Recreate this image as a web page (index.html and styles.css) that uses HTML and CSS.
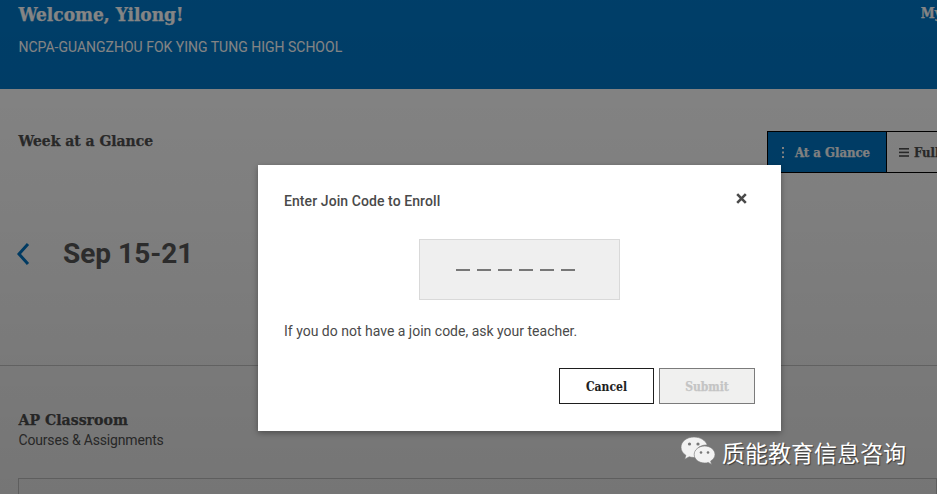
FILE: index.html
```html
<!DOCTYPE html>
<html lang="en">
<head>
<meta charset="utf-8">
<title>Enter Join Code</title>
<link rel="stylesheet" href="styles.css">
</head>
<body>
<div class="page">
  <header class="hero">
    <div class="hero-text">
      <h1 class="welcome">Welcome, Yilong!</h1>
      <p class="school">NCPA-GUANGZHOU FOK YING TUNG HIGH SCHOOL</p>
    </div>
    <span class="my-link">My</span>
  </header>
  <section class="week">
    <div class="week-head">
      <h2 class="week-title">Week at a Glance</h2>
      <div class="toggle">
        <span class="toggle-btn is-active">
          <svg class="toggle-icon" width="4" height="11" viewBox="0 0 4 11"><rect x="1" y="0" width="2" height="2"/><rect x="1" y="4.5" width="2" height="2"/><rect x="1" y="9" width="2" height="2"/></svg>
          <span class="toggle-label">At a Glance</span>
        </span>
        <span class="toggle-btn">
          <svg class="toggle-icon" width="10" height="9" viewBox="0 0 10 9"><rect y="0" width="10" height="1.6"/><rect y="3.6" width="10" height="1.6"/><rect y="7.2" width="10" height="1.6"/></svg>
          <span class="toggle-label">Full</span>
        </span>
      </div>
    </div>
    <div class="date-row">
      <svg class="chev" width="14" height="24" viewBox="0 0 14 24"><path d="M12 2 L3 12 L12 22" fill="none" stroke="currentColor" stroke-width="3"/></svg>
      <span class="date">Sep 15-21</span>
    </div>
  </section>
  <section class="classroom">
    <h2 class="class-title">AP Classroom</h2>
    <p class="class-sub">Courses &amp; Assignments</p>
    <div class="class-card"></div>
  </section>
</div>

<div class="scrim"></div>

<div class="modal">
  <div class="modal-head">
    <h3 class="modal-title">Enter Join Code to Enroll</h3>
    <svg class="close" width="11" height="11" viewBox="0 0 11 11"><path d="M1.2 1.2 L9.8 9.8 M9.8 1.2 L1.2 9.8" stroke="currentColor" stroke-width="2.6" fill="none"/></svg>
  </div>
  <div class="code-box">
    <span class="dash"></span><span class="dash"></span><span class="dash"></span><span class="dash"></span><span class="dash"></span><span class="dash"></span>
  </div>
  <p class="hint">If you do not have a join code, ask your teacher.</p>
  <div class="actions">
    <button class="btn btn-cancel">Cancel</button>
    <button class="btn btn-submit">Submit</button>
  </div>
</div>

<div class="watermark">
  <svg class="wm-icon" width="36" height="31" viewBox="0 0 36 31">
    <path class="wm-back" d="M14 1C6.800 1 1 5.600 1 11.300c0 3.300 1.900 6.100 4.900 8l-1.200 3.900 4.500-2.400c1.500.4 3 .7 4.800.7.500 0 1 0 1.500-.1-.3-.9-.5-1.900-.5-2.900 0-5.300 5-9.500 11.300-9.500h.9C25.700 4.500 20.400 1 14 1z"/>
    <path class="wm-front" d="M35 18.500c0-4.800-4.700-8.500-10.300-8.500-5.900 0-10.500 3.700-10.500 8.500s4.600 8.500 10.500 8.500c1.200 0 2.400-.2 3.500-.6l3.400 2-1-3.300c2.700-1.700 4.400-4 4.400-6.600z"/>
    <circle class="wm-eye" cx="9.500" cy="8" r="1.600"/><circle class="wm-eye" cx="18" cy="8" r="1.600"/>
    <circle class="wm-eye" cx="21" cy="16.500" r="1.300"/><circle class="wm-eye" cx="28" cy="16.500" r="1.300"/>
  </svg>
  <span class="wm-text">质能教育信息咨询</span>
</div>
</body>
</html>
```
FILE: styles.css
```css
* { box-sizing: border-box; }
html, body { margin: 0; height: 100%; overflow: hidden; background: #fff; }
body { font-family: Roboto, "Liberation Sans", sans-serif; color: #555; }
h1, h2, h3, p { margin: 0; }

.welcome, .my-link, .week-title, .toggle-btn, .class-title, .btn {
  font-family: "DejaVu Serif Condensed", "DejaVu Serif", serif;
  font-weight: 700;
  -webkit-text-stroke: .25px currentColor;
}

.page { width: 937px; height: 494px; overflow: hidden; }

.hero {
  height: 89px;
  background: #0077c8;
  color: #fff;
  padding: 0 0 0 18.5px;
  display: flex;
  justify-content: space-between;
  align-items: flex-start;
}
.welcome { font-size: 18.9px; line-height: 28px; }
.school { font-size: 14px; line-height: 20px; margin-top: 9px; }
.my-link { font-size: 14px; line-height: 26px; margin-right: -5px; }

.week { height: 277px; border-bottom: 1px solid #ccc; padding-left: 18.5px; }
.week-head { display: flex; justify-content: space-between; align-items: flex-start; padding-top: 42px; margin-right: -120px; }
.week-title { font-size: 15.5px; line-height: 21px; margin-top: -1px; color: #505050; }
.toggle { display: flex; width: 290px; height: 42px; border: 1px solid #000; flex-shrink: 0; }
.toggle-btn {
  display: flex; align-items: center; gap: 5px;
  padding: 0 0 0 12px;
  font-size: 13px;
  white-space: nowrap;
  background: #fff;
  color: #505050;
}
.toggle-btn.is-active { width: 119px; background: #0077c8; color: #fff; border-right: 1px solid #000; padding-left: 13px; gap: 10px; }
.toggle-icon { fill: currentColor; }

.date-row { display: flex; align-items: center; gap: 33px; margin: 63px 0 0 -2.5px; }
.chev { color: #0077c8; }
.date { font-size: 28px; line-height: 36px; font-weight: 700; color: #5a5a5a; }

.classroom { padding: 44px 0 0 18.5px; }
.class-title { font-size: 15.7px; line-height: 20px; color: #505050; }
.class-sub { font-size: 14px; line-height: 20px; letter-spacing: -.18px; }
.class-card { height: 40px; margin: 28px 0 0 -.5px; border: 1px solid #ccc; }

.scrim {
  position: absolute; inset: 0;
  background: linear-gradient(rgba(0,0,0,.48), rgba(0,0,0,.54));
}

.modal {
  position: absolute;
  left: 258px; top: 165px;
  width: 523px; height: 266px;
  background: #fff;
  padding: 26px;
  box-shadow: 0 2px 6px rgba(0,0,0,.35);
  color: #4a4a4a;
}
.modal-head { display: flex; justify-content: space-between; align-items: flex-start; height: 48px; }
.modal-title { font-size: 14px; font-weight: 500; line-height: 20px; letter-spacing: .08px; }
.close { margin: 2px 8px 0 0; }
.code-box {
  width: 201px; height: 61px; margin-left: 135px; padding-right: 8px;
  background: #efefef; border: 1px solid #d9d9d9;
  display: flex; align-items: center; justify-content: center; gap: 7.2px;
}
.dash { width: 14px; height: 2px; background: #777; }
.hint { font-size: 14px; line-height: 20px; margin-top: 21px; }
.actions { display: flex; justify-content: flex-end; gap: 5px; margin-top: 27px; }
.btn { width: 95px; height: 36px; padding: 2px 0 0; background: #fff; font-size: 12px; line-height: 1; }
.btn-cancel { border: 1px solid #1e1e1e; color: #1e1e1e; -webkit-text-stroke: .1px currentColor; }
.btn-submit { width: 96px; border: 1px solid #7b7b7b; background: #f0f0ef; color: #c4c4c4; }

.watermark {
  position: absolute; left: 680px; top: 436px;
  display: flex; align-items: center; gap: 6px;
  color: #fff;
}
.wm-back, .wm-front { fill: #f2f2f2; stroke: #777; stroke-width: .6; }
.wm-eye { fill: #777; }
.wm-text {
  font-family: "Noto Sans CJK SC", sans-serif;
  font-size: 23px; line-height: 30px;
  text-shadow: 1px 1px 1px rgba(0,0,0,.5);
}
```
